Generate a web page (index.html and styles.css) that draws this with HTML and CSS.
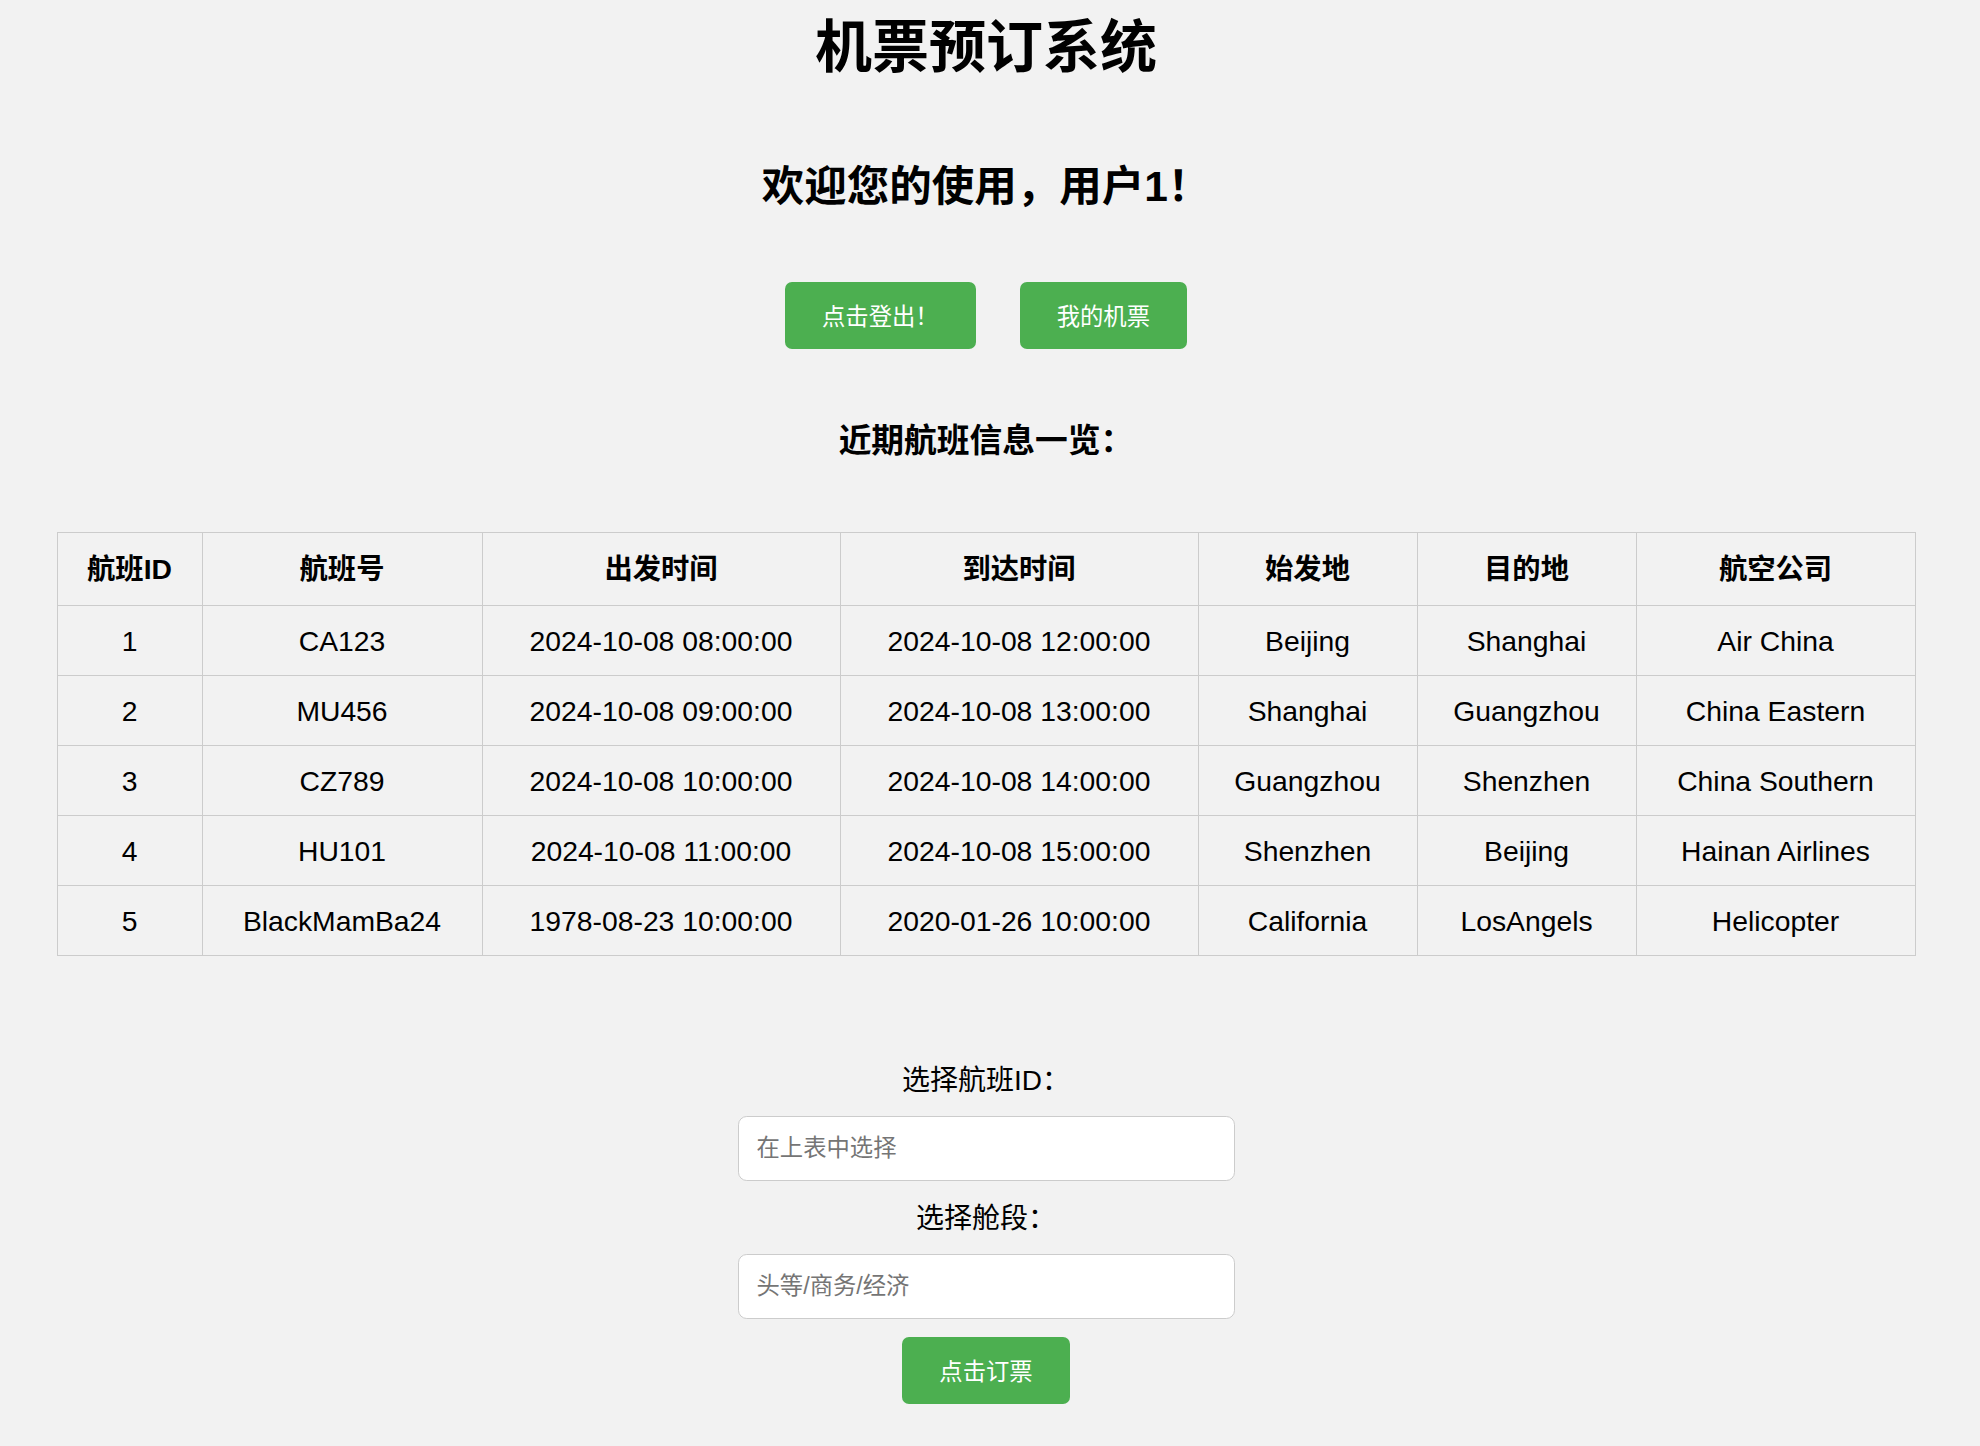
FILE: index.html
```html
<!DOCTYPE html>
<html lang="zh-CN">
<head>
<meta charset="utf-8">
<title>机票预订系统</title>
<link rel="stylesheet" href="styles.css">
</head>
<body>
<h1 class="title">机票预订系统</h1>
<h2 class="welcome">欢迎您的使用，用户1！</h2>
<div class="actions">
  <button class="btn">点击登出！</button>
  <button class="btn">我的机票</button>
</div>
<h3 class="subtitle">近期航班信息一览：</h3>
<table class="flights">
  <colgroup>
    <col class="c-id"><col class="c-no"><col class="c-dep"><col class="c-arr"><col class="c-from"><col class="c-to"><col class="c-air">
  </colgroup>
  <thead>
    <tr><th>航班ID</th><th>航班号</th><th>出发时间</th><th>到达时间</th><th>始发地</th><th>目的地</th><th>航空公司</th></tr>
  </thead>
  <tbody>
    <tr><td>1</td><td>CA123</td><td>2024-10-08 08:00:00</td><td>2024-10-08 12:00:00</td><td>Beijing</td><td>Shanghai</td><td>Air China</td></tr>
    <tr><td>2</td><td>MU456</td><td>2024-10-08 09:00:00</td><td>2024-10-08 13:00:00</td><td>Shanghai</td><td>Guangzhou</td><td>China Eastern</td></tr>
    <tr><td>3</td><td>CZ789</td><td>2024-10-08 10:00:00</td><td>2024-10-08 14:00:00</td><td>Guangzhou</td><td>Shenzhen</td><td>China Southern</td></tr>
    <tr><td>4</td><td>HU101</td><td>2024-10-08 11:00:00</td><td>2024-10-08 15:00:00</td><td>Shenzhen</td><td>Beijing</td><td>Hainan Airlines</td></tr>
    <tr><td>5</td><td>BlackMamBa24</td><td>1978-08-23 10:00:00</td><td>2020-01-26 10:00:00</td><td>California</td><td>LosAngels</td><td>Helicopter</td></tr>
  </tbody>
</table>
<form class="booking">
  <label class="field-label" for="fid">选择航班ID：</label>
  <input class="field" id="fid" type="text" placeholder="在上表中选择">
  <label class="field-label" for="cls">选择舱段：</label>
  <input class="field" id="cls" type="text" placeholder="头等/商务/经济">
  <button class="btn" type="button">点击订票</button>
</form>
</body>
</html>
```

FILE: styles.css
```css
html, body {
  background: #f2f2f2;
}
body {
  margin: 0;
  padding: 19px 8px 0 0;
  font-family: "Liberation Sans", Arial, "Noto Sans CJK SC", sans-serif;
  color: #000;
  text-align: center;
}
.title {
  margin: 0;
  font-size: 57px;
  line-height: 56px;
  font-weight: 700;
}
.welcome {
  margin: 91px 0 0;
  font-size: 42.5px;
  line-height: 42px;
  font-weight: 700;
}
.actions {
  margin-top: 74px;
  display: flex;
  justify-content: center;
  gap: 44px;
}
.btn {
  display: inline-block;
  box-sizing: border-box;
  height: 67px;
  padding: 18px 37px;
  border: none;
  border-radius: 7px;
  background: #4caf50;
  color: #fff;
  font-family: "Noto Sans CJK SC", sans-serif;
  font-size: 23.33px;
  line-height: 31px;
  cursor: pointer;
}
.subtitle {
  margin: 75px 0 0;
  font-size: 32.76px;
  line-height: 33px;
  font-weight: 700;
}
.flights {
  margin: 75px auto 0;
  width: 1858px;
  table-layout: fixed;
  border-collapse: collapse;
  font-size: 28.3px;
}
.c-id { width: 145px; }
.c-no { width: 280px; }
.c-dep { width: 358px; }
.c-arr { width: 358px; }
.c-from { width: 219px; }
.c-to { width: 219px; }
.c-air { width: 279px; }
.flights th,
.flights td {
  border: 1px solid #cccccc;
  text-align: center;
  padding-left: 6px;
  padding-right: 6px;
  white-space: nowrap;
}
.flights th {
  font-weight: 700;
  line-height: 36px;
  padding-top: 18px;
  padding-bottom: 18px;
}
.flights td {
  line-height: 32px;
  padding-top: 19px;
  padding-bottom: 18px;
}
.booking {
  margin-top: 106px;
  display: flex;
  flex-direction: column;
  align-items: center;
}
.field-label {
  display: block;
  font-size: 28px;
  line-height: 37px;
  margin-bottom: 17px;
}
.field {
  box-sizing: border-box;
  width: 497px;
  height: 65px;
  margin: 0 0 18.5px;
  padding: 0 18px;
  border: 1px solid #cccccc;
  border-radius: 8.75px;
  background: #fff;
  font-family: "Liberation Sans", Arial, "Noto Sans CJK SC", sans-serif;
  font-size: 23.33px;
  color: #000;
  outline: none;
}
.field::placeholder {
  color: #757575;
}
```
